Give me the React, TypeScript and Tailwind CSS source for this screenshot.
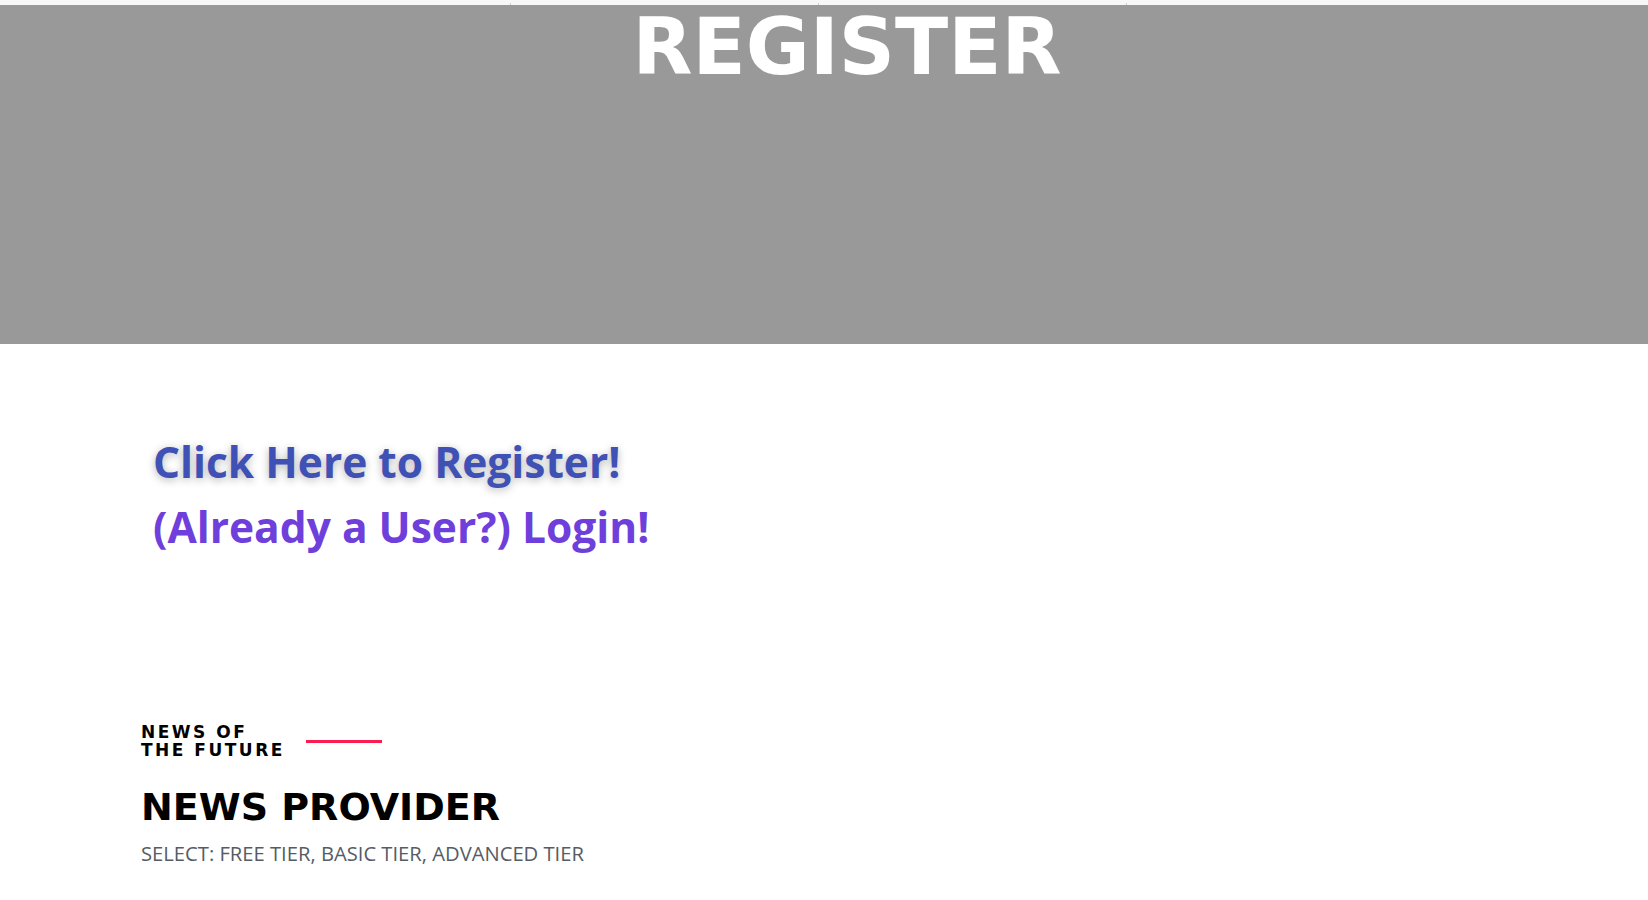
import React from "react";

const heading = { fontFamily: '"DejaVu Sans", "Open Sans", sans-serif' };
const open = { fontFamily: '"Open Sans", "Noto Sans", sans-serif' };

export default function App() {
  return (
    <div className="min-h-[900px] w-full bg-white" style={heading}>
      <div className="relative h-[5px] bg-[#f7f7f7]">
        <span className="absolute left-[510px] bottom-0 h-[2px] w-px bg-[#cfcfcf]" />
        <span className="absolute left-[818px] bottom-0 h-[2px] w-px bg-[#cfcfcf]" />
        <span className="absolute left-[1126px] bottom-0 h-[2px] w-px bg-[#cfcfcf]" />
      </div>
      <div className="h-[339px] bg-[#999999] flex justify-center pl-[46px]">
        <h1 className="text-[78px] leading-none font-bold text-white pt-[3px]">REGISTER</h1>
      </div>
      <div className="pl-[153px] pt-[85px] flex flex-col" style={open}>
        <a className="text-[42.5px] font-bold text-[#3f51b5] leading-[65px] [text-shadow:0_2px_8px_rgba(0,0,0,0.3)]">
          Click Here to Register!
        </a>
        <a className="text-[42.5px] font-bold text-[#6f3fdc] leading-[65px]">
          (Already a User?) Login!
        </a>
      </div>
      <div className="pl-[141px] pt-[164px]">
        <div className="flex items-center gap-[21px]">
          <div className="text-[17px] font-bold leading-[18px] tracking-[2.5px] text-black">
            NEWS OF
            <br />
            THE FUTURE
          </div>
          <div className="h-[3px] w-[76px] bg-[#fb1c52]" />
        </div>
        <div className="mt-[29px] text-[38px] font-bold leading-none text-black">NEWS PROVIDER</div>
        <div className="mt-[17px] text-[20.2px] leading-none text-[#555c66]" style={open}>
          SELECT: FREE TIER, BASIC TIER, ADVANCED TIER
        </div>
      </div>
    </div>
  );
}
